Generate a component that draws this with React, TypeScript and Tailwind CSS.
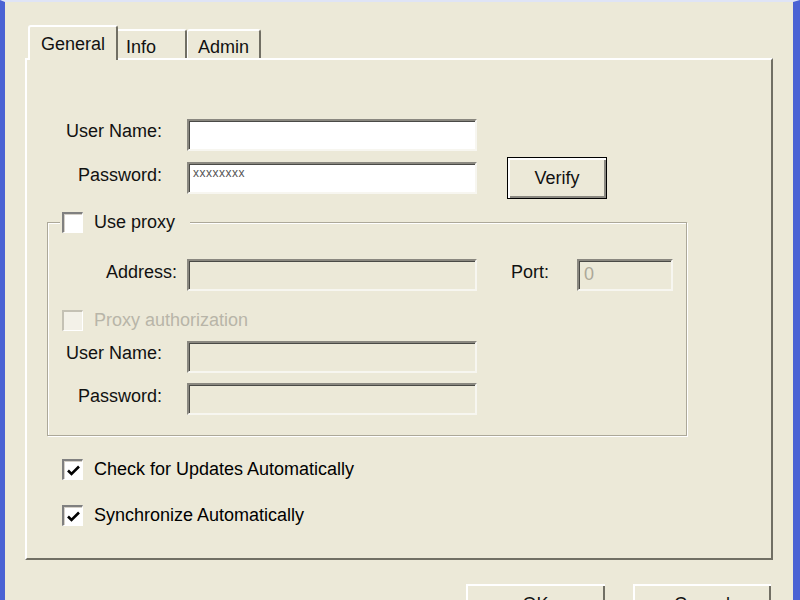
const raised =
  'border-t-2 border-l-2 border-r-2 border-b-2 border-t-white border-l-white border-r-[#716f64] border-b-[#716f64]'
const sunken =
  'border-t-2 border-l-2 border-r-2 border-b-2 border-t-[#8a8880] border-l-[#8a8880] border-r-[#f7f6f0] border-b-[#f7f6f0] shadow-[inset_1px_1px_0_#4a4a46]'

function Input({ w = 'w-[290px]', disabled = false, children }: { w?: string; disabled?: boolean; children?: React.ReactNode }) {
  return (
    <div className={`${w} h-[32px] ${sunken} ${disabled ? 'bg-[#ECE9D8]' : 'bg-white'}`}>
      {children}
    </div>
  )
}

function Check({ checked = false, disabled = false }: { checked?: boolean; disabled?: boolean }) {
  return (
    <div
      className={
        'flex h-[21px] w-[21px] shrink-0 items-center justify-center border-t-2 border-l-2 border-r border-b ' +
        (disabled
          ? 'border-t-[#c4c1b4] border-l-[#c4c1b4] border-r-white border-b-white bg-[#f3f1e8]'
          : 'border-t-[#808080] border-l-[#808080] border-r-white border-b-white bg-white shadow-[inset_1px_1px_0_#d4d0c8]')
      }
    >
      {checked && (
        <svg width="15" height="13" viewBox="0 0 15 13">
          <path d="M2 6.5 L5.5 10 L13 2.5" fill="none" stroke="#000" strokeWidth="2.6" />
        </svg>
      )}
    </div>
  )
}

function Label({ w, pt = 'pt-[4px]', children }: { w: string; pt?: string; children: React.ReactNode }) {
  return <div className={`${w} ${pt} shrink-0 text-right leading-[18px]`}>{children}</div>
}

function CheckRow({ label, checked, disabled, className = '' }: { label: string; checked?: boolean; disabled?: boolean; className?: string }) {
  return (
    <div className={`flex items-center gap-[11px] ${className}`}>
      <Check checked={checked} disabled={disabled} />
      <span className={`leading-[21px] ${disabled ? 'text-[#b8b5a8]' : 'text-black'}`}>{label}</span>
    </div>
  )
}

export default function App() {
  return (
    <div className="h-[600px] w-[800px] overflow-hidden border-t-2 border-l-[5px] border-r-[7px] border-t-[#dfe4f6] border-l-[#4a62d4] border-r-[#4a62d4] bg-[#ECE9D8] pt-[23px] font-['Liberation_Sans',Arial,sans-serif] text-[18px] text-[#111]">
      <div className="ml-[20px] w-[748px]">
        {/* tabs */}
        <div className="relative z-10 flex h-[33px] items-end">
          <div className="-mb-[2px] ml-[3px] h-[35px] w-[90px] rounded-t-[3px] border-t-2 border-l-2 border-r-2 border-t-white border-l-white border-r-[#716f64] bg-[#ECE9D8] pl-[11px] pt-[8px] leading-[18px]">
            General
          </div>
          <div className="h-[29px] w-[69px] rounded-tr-[3px] border-t-2 border-r-2 border-t-white border-r-[#716f64] pl-[8px] pt-[7px] leading-[18px]">
            Info
          </div>
          <div className="h-[29px] w-[74px] rounded-t-[3px] border-t-2 border-l border-r-2 border-t-white border-l-white border-r-[#716f64] pl-[10px] pt-[7px] leading-[18px]">
            Admin
          </div>
        </div>

        {/* panel */}
        <div className={`h-[502px] w-[748px] ${raised} pt-[59px]`}>
          <div className="flex items-start">
            <Label w="w-[135px]" pt="pt-[3px]">User Name:</Label>
            <div className="ml-[25px]">
              <Input />
            </div>
          </div>
          <div className="mt-[11px] flex items-start">
            <Label w="w-[135px]">Password:</Label>
            <div className="ml-[25px]">
              <Input>
                <div className="pl-[4px] pt-[1px] text-[12px] leading-[16px] tracking-[0.5px] text-[#555]">xxxxxxxx</div>
              </Input>
            </div>
            <button
              className={`-mt-[5px] ml-[30px] h-[42px] w-[100px] border border-black bg-[#ECE9D8] leading-[18px] text-[#111] shadow-[inset_2px_2px_0_#fff,inset_-2px_-2px_0_#8a8880]`}
            >
              Verify
            </button>
          </div>

          {/* proxy group */}
          <fieldset className="ml-[20px] mt-[13px] w-[640px] border border-[#aca899] pb-[20px] shadow-[inset_1px_1px_0_#fff,1px_1px_0_#fff]">
            <legend className="ml-[12px] flex items-center gap-[11px] bg-[#ECE9D8] pl-[2px] pr-[15px]">
              <Check />
              <span className="leading-[21px]">Use proxy</span>
            </legend>
            <div className="mt-[26px] flex items-start">
              <Label w="w-[129px]">Address:</Label>
              <div className="ml-[10px]">
                <Input disabled />
              </div>
              <div className="ml-[34px] pt-[4px] leading-[18px]">Port:</div>
              <div className="ml-[28px]">
                <Input w="w-[96px]" disabled>
                  <div className="pl-[5px] pt-[4px] leading-[18px] text-[#aca899]">0</div>
                </Input>
              </div>
            </div>
            <CheckRow className="ml-[14px] mt-[19px]" label="Proxy authorization" disabled />
            <div className="mt-[10px] flex items-start">
              <Label w="w-[114px]" pt="pt-[3px]">User Name:</Label>
              <div className="ml-[25px]">
                <Input disabled />
              </div>
            </div>
            <div className="mt-[10px] flex items-start">
              <Label w="w-[114px]">Password:</Label>
              <div className="ml-[25px]">
                <Input disabled />
              </div>
            </div>
          </fieldset>

          <CheckRow className="ml-[35px] mt-[23px]" label="Check for Updates Automatically" checked />
          <CheckRow className="ml-[35px] mt-[25px]" label="Synchronize Automatically" checked />
        </div>

        {/* dialog buttons */}
        <div className="mt-[24px] flex justify-end gap-[28px] pr-[2px]">
          <button className="h-[40px] w-[139px] bg-[#ECE9D8] leading-[18px] text-[#111] shadow-[inset_2px_2px_0_#fff,inset_-2px_-2px_0_#716f64]">
            OK
          </button>
          <button className="h-[40px] w-[138px] bg-[#ECE9D8] leading-[18px] text-[#111] shadow-[inset_2px_2px_0_#fff,inset_-2px_-2px_0_#716f64]">
            Cancel
          </button>
        </div>
      </div>
    </div>
  )
}
